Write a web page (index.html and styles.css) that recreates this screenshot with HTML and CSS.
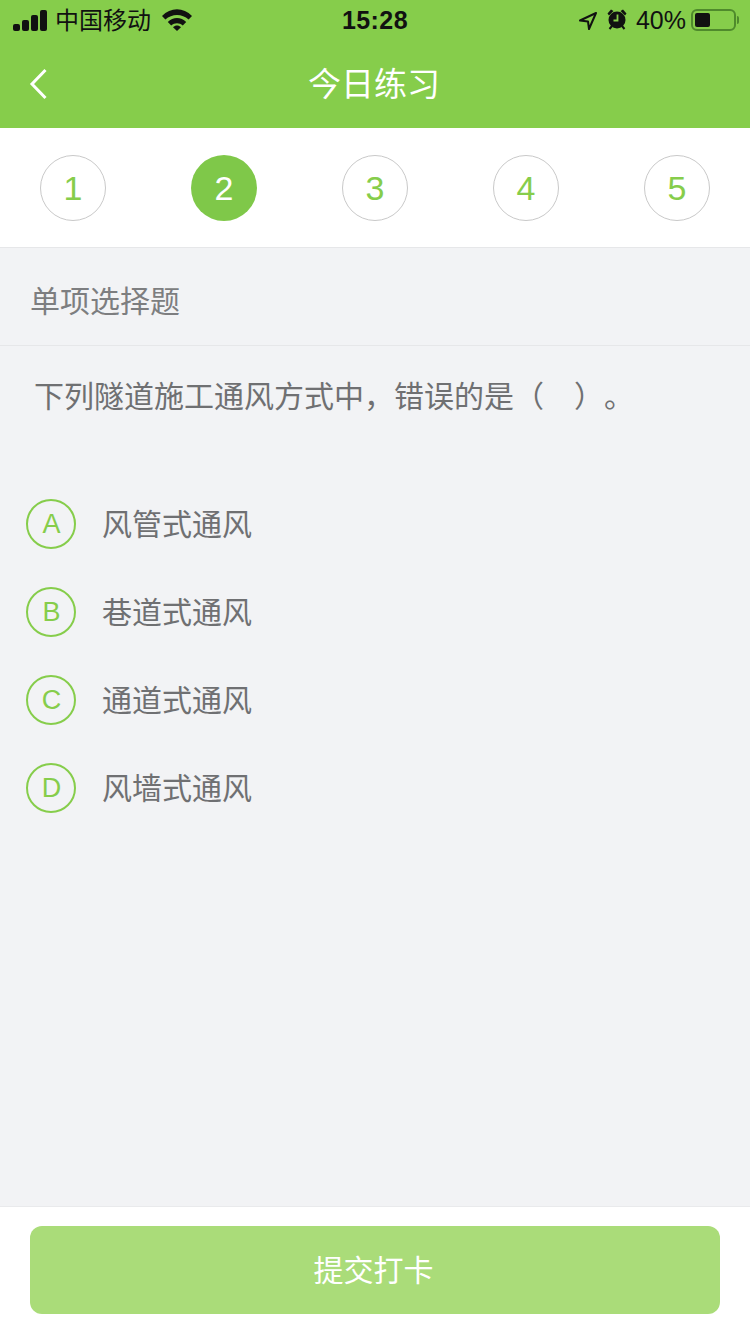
FILE: index.html

```html
<!DOCTYPE html>
<html lang="zh-CN">
<head>
  <meta charset="UTF-8"/>
  <meta name="viewport" content="width=device-width, initial-scale=1"/>
  <title>今日练习</title>
  <link rel="stylesheet" href="styles.css">
</head>
<body>
  <div class="page">
    <header class="top">
      <div class="status-bar">
        <div class="status-left">
          <svg class="signal" width="34" height="21" viewBox="0 0 34 21">
            <rect x="0" y="14" width="7" height="7" rx="2"/>
            <rect x="9" y="10" width="7" height="11" rx="2"/>
            <rect x="18" y="5" width="7" height="16" rx="2"/>
            <rect x="27" y="0" width="7" height="21" rx="2"/>
          </svg>
          <span class="carrier">中国移动</span>
          <svg class="wifi" width="30" height="22" viewBox="0 0 30 22">
            <path d="M0 7 C8.5 -2 21.5 -2 30 7 L26.6 10.6 C20.2 4.6 9.8 4.6 3.4 10.6 Z"/>
            <path d="M5.8 13 C11 7.8 19 7.8 24.2 13 L20.8 16.4 C17.4 13.4 12.6 13.4 9.2 16.4 Z"/>
            <path d="M11 18.2 C13.4 16 16.6 16 19 18.2 L15 22 Z"/>
          </svg>
        </div>
        <span class="clock">15:28</span>
        <div class="status-right">
          <svg class="locate" width="20" height="20" viewBox="0 0 20 20">
            <path d="M18 2 L2 9.5 L10 10.5 L11 18 Z" fill="none" stroke="#111" stroke-width="2" stroke-linejoin="round"/>
          </svg>
          <svg class="alarm" width="22" height="22" viewBox="0 0 22 22">
            <circle cx="11" cy="12" r="8.5" fill="#111"/>
            <path d="M1.5 5.5 L5 1.5 L7.5 3 L3 7.5 Z M20.5 5.5 L17 1.5 L14.5 3 L19 7.5 Z" fill="#111"/>
            <path d="M3.5 21 L6 18 M18.5 21 L16 18" stroke="#111" stroke-width="2"/>
            <path d="M11.5 6.5 V12.5 H7.5" fill="none" stroke="#86cd4b" stroke-width="1.8"/>
          </svg>
          <span class="percent">40%</span>
          <div class="battery"><div class="battery-level"></div></div>
          <div class="battery-tip"></div>
        </div>
      </div>
      <nav class="nav-bar">
        <svg class="back" width="20" height="32" viewBox="0 0 20 32">
          <path d="M16.5 2 L3 16 L16.5 30" fill="none" stroke="#fff" stroke-width="3"/>
        </svg>
        <h1 class="nav-title">今日练习</h1>
      </nav>
    </header>

    <div class="steps">
      <div class="step">1</div>
      <div class="step active">2</div>
      <div class="step">3</div>
      <div class="step">4</div>
      <div class="step">5</div>
    </div>

    <main class="content">
      <div class="q-type">单项选择题</div>
      <p class="q-text">下列隧道施工通风方式中，错误的是（　）。</p>
      <ul class="options">
        <li class="option"><span class="letter">A</span><span class="opt-text">风管式通风</span></li>
        <li class="option"><span class="letter">B</span><span class="opt-text">巷道式通风</span></li>
        <li class="option"><span class="letter">C</span><span class="opt-text">通道式通风</span></li>
        <li class="option"><span class="letter">D</span><span class="opt-text">风墙式通风</span></li>
      </ul>
    </main>

    <footer class="bottom">
      <button class="submit">提交打卡</button>
    </footer>
  </div>
</body>
</html>
```

FILE: styles.css

```css
:root {
  --green: #86cd4b;
  --green-dark: #7fc849;
  --green-light: #aadc79;
  --page-bg: #f2f3f5;
  --line: #e6e7e9;
  --text-color: #6f7072;
}

* {
  box-sizing: border-box;
}

body {
  margin: 0;
  font-family: "Liberation Sans", "Noto Sans CJK SC", sans-serif;
  background-color: var(--page-bg);
  text-spacing-trim: space-all;
}

.page {
  width: 750px;
  height: 1334px;
  display: flex;
  flex-direction: column;
  overflow: hidden;
}

.top {
  height: 128px;
  background-color: var(--green);
}

.status-bar {
  height: 40px;
  padding: 0 11px 0 13px;
  display: flex;
  align-items: center;
  justify-content: space-between;
  color: #111;
  font-size: 25px;
}

.status-left,
.status-right {
  width: 240px;
  display: flex;
  align-items: center;
}

.status-right {
  justify-content: flex-end;
}

.signal,
.wifi {
  fill: #111;
}

.carrier {
  margin-left: 8px;
  padding-bottom: 4px;
  font-size: 24px;
}

.wifi {
  margin-left: 11px;
}

.clock {
  margin-left: -2px;
  font-size: 25px;
  font-weight: bold;
  letter-spacing: 0.4px;
}

.locate {
  margin-top: 2px;
}

.alarm {
  margin: 0 0 2px 8px;
}

.percent {
  margin-left: 8px;
  font-size: 25px;
}

.battery {
  width: 45px;
  height: 22px;
  margin-left: 5px;
  padding: 2px;
  border: 2px solid #4f8a2c;
  border-radius: 6px;
}

.battery-level {
  width: 15px;
  height: 100%;
  background-color: #111;
  border-radius: 2px;
}

.battery-tip {
  width: 2px;
  height: 8px;
  margin-left: 1px;
  background-color: #4f8a2c;
  border-radius: 0 2px 2px 0;
}

.nav-bar {
  height: 88px;
  position: relative;
  display: flex;
  align-items: center;
  justify-content: center;
}

.back {
  position: absolute;
  left: 29px;
  top: 28px;
}

.nav-title {
  margin: 0 2px 0 0;
  padding-bottom: 4px;
  color: #fff;
  font-size: 33px;
  font-weight: normal;
}

.steps {
  height: 120px;
  padding: 27px 40px 0;
  display: flex;
  justify-content: space-between;
  background-color: #fff;
  border-bottom: 1px solid var(--line);
}

.step {
  width: 66px;
  height: 66px;
  display: flex;
  align-items: center;
  justify-content: center;
  border: 1px solid #c9c9c9;
  border-radius: 50%;
  color: var(--green);
  font-size: 34px;
}

.step.active {
  border: none;
  background-color: var(--green-dark);
  color: #fff;
}

.content {
  flex: 1;
}

.q-type {
  height: 98px;
  padding-left: 30px;
  line-height: 107px;
  border-bottom: 1px solid var(--line);
  color: #7d7e80;
  font-size: 30px;
}

.q-text {
  margin: 0;
  padding: 31px 0 0 34px;
  color: var(--text-color);
  font-size: 30px;
  line-height: 40px;
}

.options {
  margin: 63px 0 0;
  padding: 0 0 0 26px;
  list-style: none;
}

.option {
  height: 88px;
  display: flex;
  align-items: center;
  color: var(--text-color);
  font-size: 30px;
}

.letter {
  width: 50px;
  height: 50px;
  margin-right: 26px;
  padding: 1px 0 0 1px;
  display: flex;
  align-items: center;
  justify-content: center;
  border: 2px solid var(--green);
  border-radius: 50%;
  color: var(--green);
  font-size: 27px;
}

.opt-text {
  padding-bottom: 4px;
}

.bottom {
  height: 128px;
  padding: 19px 30px 0;
  background-color: #fff;
  border-top: 1px solid #e9eaec;
}

.submit {
  width: 100%;
  height: 88px;
  padding: 0 3px 4px 0;
  border: none;
  border-radius: 12px;
  background-color: var(--green-light);
  color: #fff;
  font-family: inherit;
  font-size: 30px;
}
```
